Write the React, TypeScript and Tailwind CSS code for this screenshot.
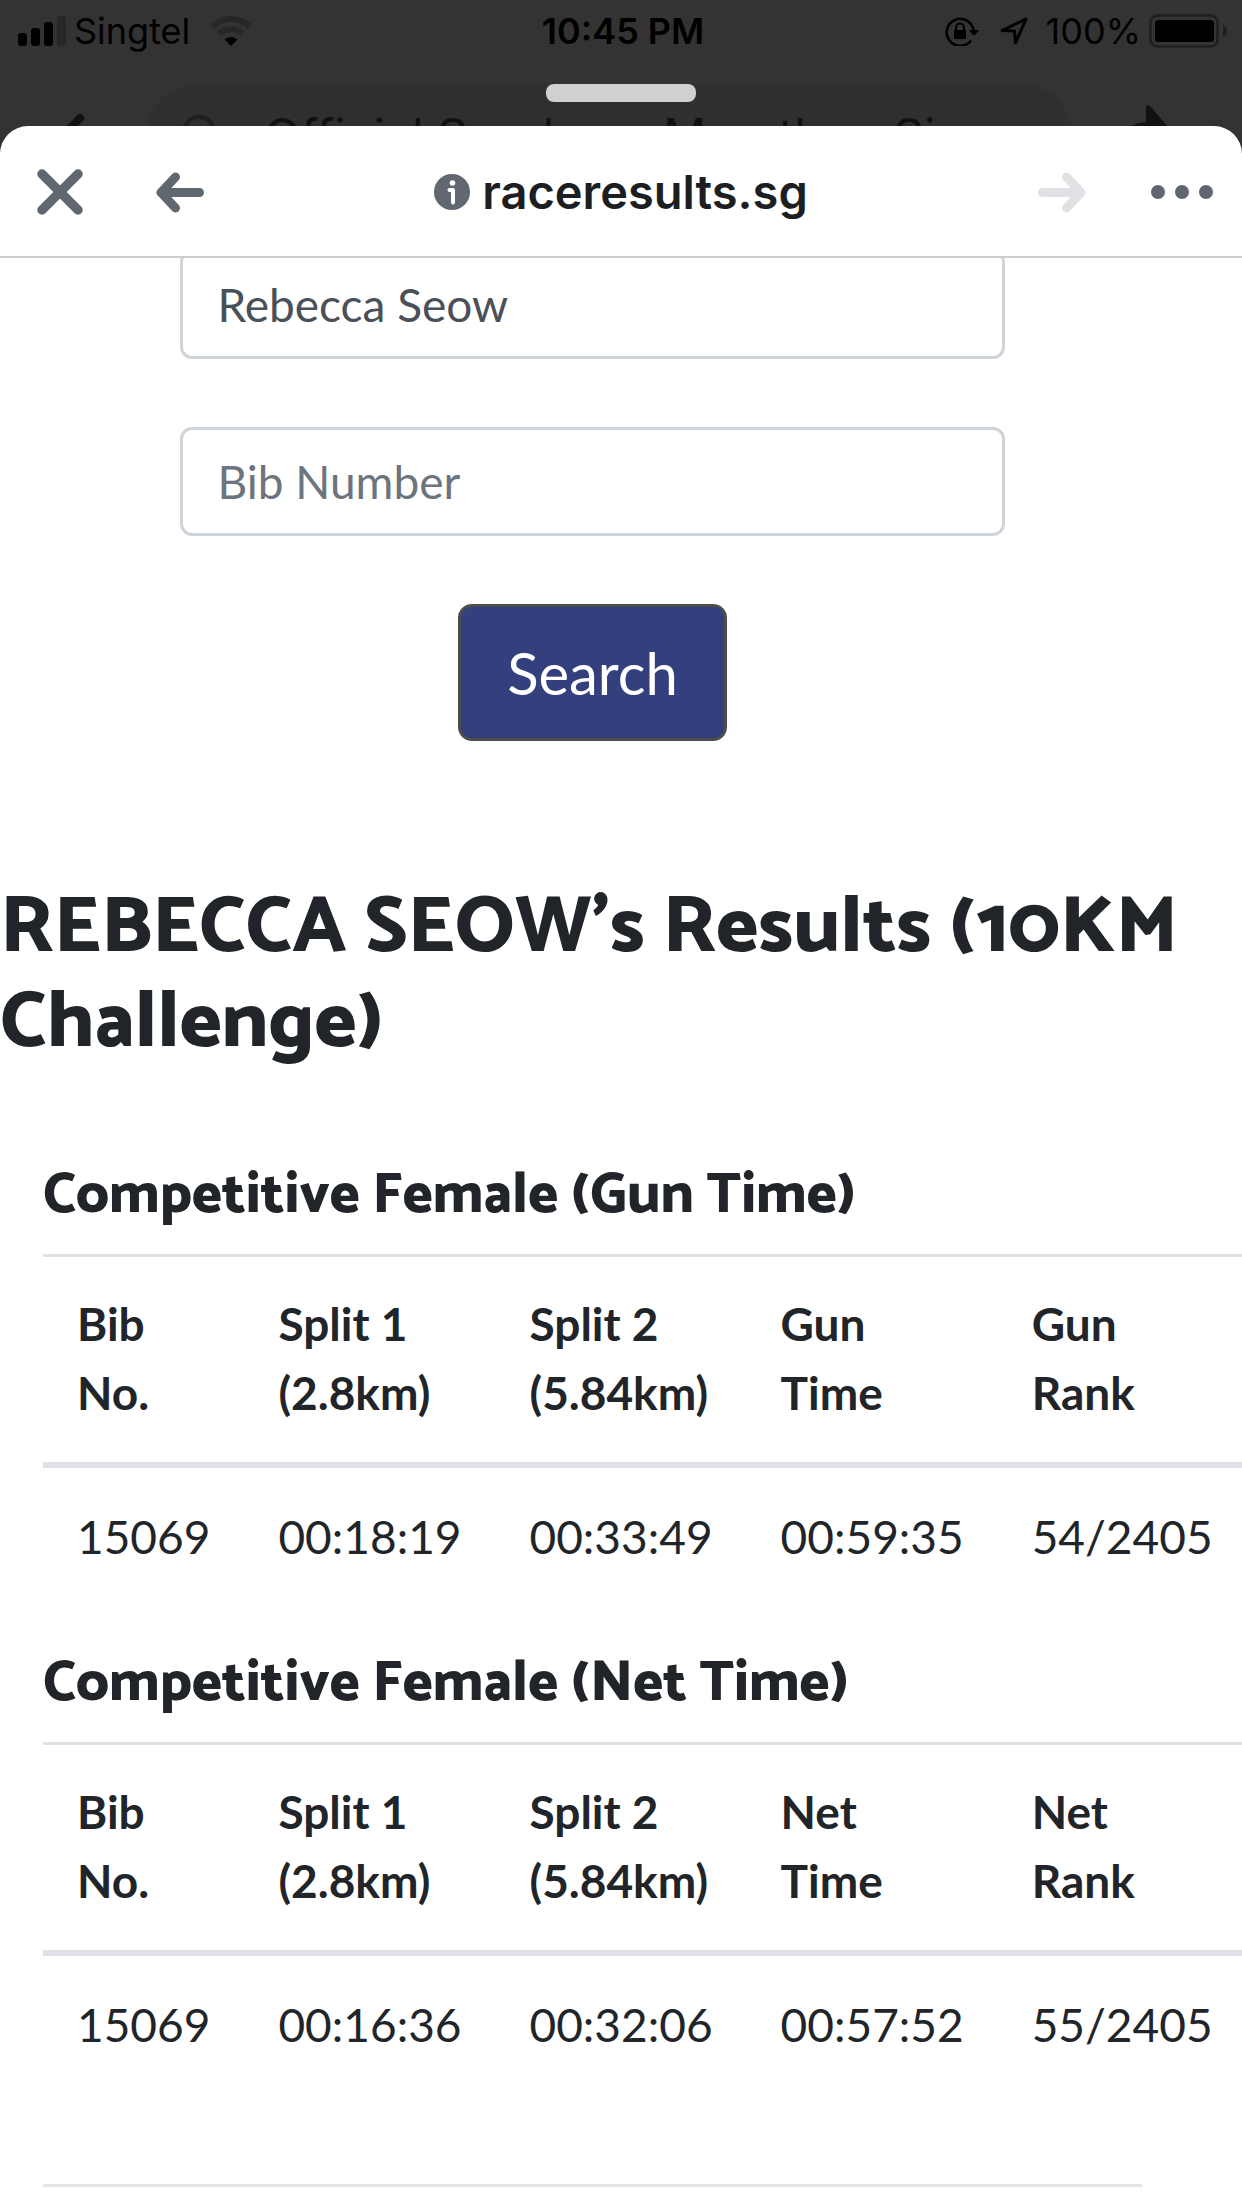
import { useState } from 'react';

type ResultTable = {
  title: string;
  columns: string[];
  rows: string[][];
};

const results: ResultTable[] = [
  {
    title: 'Competitive Female (Gun Time)',
    columns: ['Bib No.', 'Split 1 (2.8km)', 'Split 2 (5.84km)', 'Gun Time', 'Gun Rank'],
    rows: [['15069', '00:18:19', '00:33:49', '00:59:35', '54/2405']],
  },
  {
    title: 'Competitive Female (Net Time)',
    columns: ['Bib No.', 'Split 1 (2.8km)', 'Split 2 (5.84km)', 'Net Time', 'Net Rank'],
    rows: [['15069', '00:16:36', '00:32:06', '00:57:52', '55/2405']],
  },
];

function StatusBar() {
  return (
    <div className="grid h-[60px] grid-cols-[1fr_auto_1fr] items-center pt-[2px] pr-[14px] pl-[18px] text-[36px] leading-[58px] text-black">
      <div className="flex items-center">
        <svg className="h-[30px] w-12" viewBox="0 0 48 30">
          <rect x="0" y="17" width="9" height="13" rx="3" />
          <rect x="13" y="12" width="9" height="18" rx="3" />
          <rect x="26" y="6" width="9" height="24" rx="3" />
          <rect x="39" y="0" width="9" height="30" rx="3" fill="#272727" />
        </svg>
        <span className="ml-2">Singtel</span>
        <svg className="ml-5 h-[30px] w-[42px]" viewBox="0 0 42 30">
          <path d="M2.5 10.5a26.5 26.5 0 0 1 37 0" fill="none" stroke="#272727" strokeWidth="6" />
          <path d="M9.5 18a16.5 16.5 0 0 1 23 0" fill="none" stroke="#272727" strokeWidth="6" />
          <path d="M21 30l-6.500-6.500q2.500-2.500 6.500-2.500t6.500 2.500z" />
        </svg>
      </div>
      <span className="font-semibold">10:45 PM</span>
      <div className="flex items-center justify-end">
        <svg className="h-[30px] w-[35px]" viewBox="0 0 35 30">
          <path d="M26 24.500a13.500 13.500 0 1 1 2.600-10" fill="none" stroke="black" strokeWidth="2.600" />
          <path d="M24 14h10l-5 6z" />
          <rect x="9" y="14" width="12" height="9" rx="1" />
          <path d="M11 15v-3.500a4 4 0 0 1 8 0V15" fill="none" stroke="black" strokeWidth="2" />
        </svg>
        <svg className="ml-5 h-[28px] w-[28px]" viewBox="0 0 28 28" fill="none" stroke="black" strokeWidth="3" strokeLinejoin="round">
          <path d="M2 13.500L26 2 15.500 26 14.500 14z" />
        </svg>
        <span className="ml-[18px]">100%</span>
        <svg className="ml-2 h-[34px] w-[79px]" viewBox="0 0 79 34">
          <rect x="1.500" y="1.500" width="67" height="31" rx="7" fill="none" stroke="#1f1f1f" strokeWidth="2.500" />
          <rect x="6" y="6" width="59" height="22" rx="3.500" />
          <path d="M74 11q4 2 4 6t-4 6z" fill="#1f1f1f" />
        </svg>
      </div>
    </div>
  );
}

// Only the top slice of the page behind the sheet is visible
function DimmedNav() {
  return (
    <div className="mt-6 flex h-[42px] items-start overflow-hidden">
      <svg className="mt-[29px] h-[50px] w-[146px] shrink-0" viewBox="0 0 146 50" fill="none" stroke="#101113" strokeWidth="8" strokeLinecap="round" strokeLinejoin="round">
        <path d="M80 5L58 28l22 22" />
      </svg>
      <div className="flex h-[104px] min-w-0 flex-1 items-center rounded-full bg-[#2f2f2f] pl-9">
        <svg className="h-[46px] w-[46px] shrink-0" viewBox="0 0 46 46" fill="none" stroke="#1e1f21" strokeWidth="4" strokeLinecap="round">
          <circle cx="17" cy="19" r="15" />
          <path d="M28 30l10 10" />
        </svg>
        <span className="ml-9 text-[48px] leading-[60px] whitespace-nowrap text-[#101113]">
          Official Sundown Marathon Sin...
        </span>
      </div>
      <svg className="mt-5 h-[60px] w-[170px] shrink-0" viewBox="0 0 170 60" fill="#101113">
        <path d="M74 4q0-4 4-2l30 35-30 35q-4 2-4-2V52q-22 0-34 14 2-46 34-48z" />
      </svg>
    </div>
  );
}

function BrowserBar() {
  return (
    <header className="grid h-[132px] grid-cols-[1fr_auto_1fr] items-center border-b-2 border-[#cccccc] px-8 pt-[2px] text-[#606770]">
      <div className="flex gap-16">
        <button aria-label="Close" className="h-14 w-14">
          <svg viewBox="0 0 56 56" fill="none" stroke="currentColor" strokeWidth="9.500" strokeLinecap="round">
            <path d="M10 10l36 36M46 10L10 46" />
          </svg>
        </button>
        <button aria-label="Back" className="h-14 w-14">
          <svg viewBox="0 0 56 56" fill="none" stroke="currentColor" strokeWidth="9" strokeLinecap="round" strokeLinejoin="round">
            <path d="M23.500 13L9 28.500 23.500 44M9 28.500h38.500" />
          </svg>
        </button>
      </div>
      <div className="flex items-center gap-3">
        <svg className="h-9 w-9" viewBox="0 0 36 36">
          <circle cx="18" cy="18" r="18" fill="currentColor" />
          <circle cx="18.500" cy="9" r="2.800" fill="white" />
          <path d="M15.500 16h3.500v12.500" fill="none" stroke="white" strokeWidth="4" strokeLinecap="round" strokeLinejoin="round" />
        </svg>
        <span className="text-[47px] leading-[60px] font-semibold text-[#1c1e21]">raceresults.sg</span>
      </div>
      <div className="flex justify-end gap-16">
        <button aria-label="Forward" disabled className="h-14 w-14 text-[#dfe1e5]">
          <svg viewBox="0 0 56 56" fill="none" stroke="currentColor" strokeWidth="9" strokeLinecap="round" strokeLinejoin="round">
            <path d="M32.500 13L47 28.500 32.500 44M47 28.500H8.500" />
          </svg>
        </button>
        <button aria-label="More" className="h-14 w-14">
          <svg className="overflow-visible" viewBox="0 0 56 56" fill="currentColor">
            <circle cx="4" cy="28" r="7" />
            <circle cx="28" cy="28" r="7" />
            <circle cx="52" cy="28" r="7" />
          </svg>
        </button>
      </div>
    </header>
  );
}

function SearchForm() {
  const [name, setName] = useState('Rebecca Seow');
  const [bib, setBib] = useState('');

  return (
    <form
      className="mx-auto -mt-2 flex w-3/4 flex-col gap-[68px]"
      onSubmit={(e) => e.preventDefault()}
    >
      <input
        aria-label="Name"
        value={name}
        onChange={(e) => setName(e.target.value)}
        className="h-[109px] w-full rounded-[12px] border-[3px] border-[#ced4da] px-[34px] text-[46px] text-[#495057]"
      />
      <input
        aria-label="Bib Number"
        placeholder="Bib Number"
        value={bib}
        onChange={(e) => setBib(e.target.value)}
        className="h-[109px] w-full rounded-[12px] border-[3px] border-[#ced4da] px-[34px] text-[46px] text-[#495057] placeholder:text-[#6c757d]"
      />
      <button
        type="submit"
        className="h-[137px] self-center rounded-[14px] border-[3px] border-[#4d4d4d] bg-[#343f7d] px-[46px] text-[58px] text-white"
      >
        Search
      </button>
    </form>
  );
}

function Results({ title, columns, rows }: ResultTable) {
  return (
    <section className="-mr-[100px] mb-[45px]">
      <h4 className="mb-6 font-[Catamaran,Lato,sans-serif] text-[57px] leading-[68px] font-extrabold">
        {title}
      </h4>
      <table className="w-full border-t-[3px] border-[#dee2e6] text-left text-[46px] leading-[69px]">
        <thead>
          <tr className="border-b-[6px] border-[#dee2e6]">
            {columns.map((col) => (
              <th key={col} className="px-[34px] pt-8 pb-[35px] align-bottom font-bold">
                {col}
              </th>
            ))}
          </tr>
        </thead>
        <tbody>
          {rows.map((row) => (
            <tr key={row[0]}>
              {row.map((cell) => (
                <td key={cell} className="px-[34px] py-[34px]">
                  {cell}
                </td>
              ))}
            </tr>
          ))}
        </tbody>
      </table>
    </section>
  );
}

export default function App() {
  return (
    <div className="flex h-screen flex-col overflow-hidden bg-[#333333] font-[Inter,sans-serif]">
      <StatusBar />
      <DimmedNav />
      <div className="relative flex min-h-0 flex-1 flex-col">
        <div className="absolute -top-[42px] left-1/2 h-[18px] w-[150px] -translate-x-1/2 rounded-[8px] bg-[#d0d0d0]" />
        <div className="flex min-h-0 flex-1 flex-col overflow-hidden rounded-t-[28px] bg-white">
          <BrowserBar />
          <main className="min-h-0 flex-1 overflow-hidden pr-[100px] pl-[43px] font-[Lato,sans-serif] text-[#212529]">
            <SearchForm />
            <h2 className="mt-[140px] -mr-[100px] mb-[91px] -ml-[43px] font-[Catamaran,Lato,sans-serif] text-[80px] leading-[95px] font-extrabold">
              REBECCA SEOW’s Results (10KM Challenge)
            </h2>
            {results.map((table) => (
              <Results key={table.title} {...table} />
            ))}
            <hr className="mt-[91px] border-t-[3px] border-[#e5e5e5]" />
          </main>
        </div>
      </div>
    </div>
  );
}
